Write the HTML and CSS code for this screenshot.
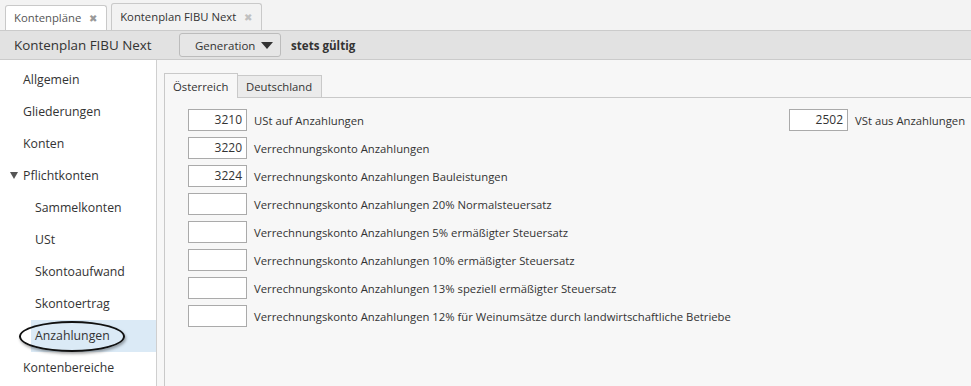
FILE: index.html
```html
<!DOCTYPE html>
<html lang="de">
<head>
<meta charset="utf-8">
<title>Kontenplan FIBU Next</title>
<link rel="stylesheet" href="styles.css">
</head>
<body>
<div class="app">
  <div class="doc-tabs">
    <div class="doc-tab">Kontenpläne <span class="x">✖</span></div>
    <div class="doc-tab active">Kontenplan FIBU Next <span class="x">✖</span></div>
  </div>
  <div class="toolbar">
    <span class="title">Kontenplan FIBU Next</span>
    <button class="dropdown">Generation <span class="caret"></span></button>
    <span class="valid">stets gültig</span>
  </div>
  <div class="main">
    <ul class="nav">
      <li class="item">Allgemein</li>
      <li class="item">Gliederungen</li>
      <li class="item">Konten</li>
      <li class="item group"><span class="tri"></span>Pflichtkonten</li>
      <li class="item sub">Sammelkonten</li>
      <li class="item sub">USt</li>
      <li class="item sub">Skontoaufwand</li>
      <li class="item sub">Skontoertrag</li>
      <li class="item sub selected">Anzahlungen<span class="ring"></span></li>
      <li class="item">Kontenbereiche</li>
    </ul>
    <div class="content">
      <div class="panel">
        <div class="tabs">
          <div class="tab active">Österreich</div>
          <div class="tab">Deutschland</div>
          <div class="tab-fill"></div>
        </div>
        <div class="form">
          <div class="col">
            <div class="row"><span class="field">3210</span><span class="lbl">USt auf Anzahlungen</span></div>
            <div class="row"><span class="field">3220</span><span class="lbl">Verrechnungskonto Anzahlungen</span></div>
            <div class="row"><span class="field">3224</span><span class="lbl">Verrechnungskonto Anzahlungen Bauleistungen</span></div>
            <div class="row"><span class="field"></span><span class="lbl">Verrechnungskonto Anzahlungen 20% Normalsteuersatz</span></div>
            <div class="row"><span class="field"></span><span class="lbl">Verrechnungskonto Anzahlungen 5% ermäßigter Steuersatz</span></div>
            <div class="row"><span class="field"></span><span class="lbl">Verrechnungskonto Anzahlungen 10% ermäßigter Steuersatz</span></div>
            <div class="row"><span class="field"></span><span class="lbl">Verrechnungskonto Anzahlungen 13% speziell ermäßigter Steuersatz</span></div>
            <div class="row"><span class="field"></span><span class="lbl">Verrechnungskonto Anzahlungen 12% für Weinumsätze durch landwirtschaftliche Betriebe</span></div>
          </div>
          <div class="col">
            <div class="row"><span class="field">2502</span><span class="lbl">VSt aus Anzahlungen</span></div>
          </div>
        </div>
      </div>
    </div>
  </div>
</div>
</body>
</html>
```
FILE: styles.css
```css
* { box-sizing: border-box; }
html, body { margin: 0; padding: 0; }
body {
  width: 971px;
  height: 386px;
  overflow: hidden;
  font-family: "Open Sans", "Noto Sans", sans-serif;
  color: #333;
  background: #f7f7f7;
}
.app { display: flex; flex-direction: column; height: 386px; }

.doc-tabs {
  height: 30px;
  background: #f3f3f3;
  display: flex;
  align-items: flex-end;
  padding-left: 5px;
  gap: 4px;
}
.doc-tab {
  height: 25px;
  padding: 0 9px 0 8px;
  border: 1px solid #c9c9c9;
  border-bottom: none;
  border-radius: 3px 3px 0 0;
  background: #fff;
  font-size: 11.3px;
  line-height: 24px;
  color: #555;
  white-space: nowrap;
}
.doc-tab.active {
  height: 27px;
  line-height: 26px;
  background: #f2f2f2;
  color: #333;
}
.doc-tab .x { font-size: 10px; color: #999; margin-left: 5px; }
.doc-tab.active .x { color: #c0c0c0; }

.toolbar {
  height: 30px;
  background: #e2e2e2;
  border-top: 1px solid #cbcbcb;
  border-bottom: 1px solid #cbcbcb;
  display: flex;
  align-items: center;
  padding-left: 14px;
}
.toolbar .title { font-size: 13.4px; color: #333; width: 165px; }
.dropdown {
  height: 24px;
  width: 102px;
  border: 1px solid #bcbcbc;
  border-radius: 3px;
  background: #e6e6e6;
  font-family: inherit;
  font-size: 11.5px;
  color: #333;
  padding: 0 0 0 15px;
  display: flex;
  align-items: center;
}
.caret {
  display: inline-block;
  width: 0; height: 0;
  border-left: 6px solid transparent;
  border-right: 6px solid transparent;
  border-top: 7px solid #333;
  margin-left: 6px;
}
.valid { font-weight: bold; font-size: 11.6px; margin-left: 10px; color: #333; }

.main { flex: 1; display: flex; min-height: 0; }
.nav {
  list-style: none;
  margin: 0;
  padding: 4px 0 0 0;
  width: 157px;
  background: #fff;
  border-right: 1px solid #cfcfcf;
}
.item {
  height: 32px;
  line-height: 32px;
  font-size: 12.3px;
  padding-left: 23px;
  color: #333;
  position: relative;
}
.item.group { padding-left: 10px; }
.tri {
  display: inline-block;
  width: 0; height: 0;
  border-left: 4px solid transparent;
  border-right: 4px solid transparent;
  border-top: 7px solid #555;
  margin-right: 5px;
  vertical-align: 1px;
}
.item.sub { margin-left: 31px; padding-left: 4px; }
.item.selected { background: #dbeaf6; }
.ring {
  position: absolute;
  left: -12px;
  top: 1px;
  width: 106px;
  height: 31px;
  border: 2.5px solid #111;
  border-radius: 50%;
  box-shadow: 1px 2px 3px rgba(0,0,0,0.35);
}

.content { flex: 1; padding: 13px 0 0 7px; min-width: 0; }
.panel { border-left: 1px solid #c9c9c9; height: 100%; }
.tabs { display: flex; align-items: flex-end; height: 25px; }
.tab {
  font-size: 11.3px;
  padding: 0 8px;
  border: 1px solid #c9c9c9;
  border-bottom: none;
  color: #333;
  white-space: nowrap;
}
.tab.active {
  height: 25px; line-height: 25px;
  border-left: none;
  background: #f7f7f7;
  width: 73px;
}
.tab:not(.active) {
  height: 23px; line-height: 22px;
  background: #ebebeb;
  border-left: none;
  border-bottom: 1px solid #c9c9c9;
  width: 84px;
}
.tab-fill { flex: 1; border-bottom: 1px solid #c9c9c9; height: 1px; }

.form {
  display: grid;
  grid-template-columns: 601px auto;
  padding: 11px 0 0 23px;
}
.col { display: flex; flex-direction: column; gap: 6px; }
.row { display: flex; align-items: center; height: 22px; }
.field {
  width: 59px;
  height: 22px;
  border: 1px solid #aaa;
  background: #fff;
  font-size: 12px;
  line-height: 20px;
  text-align: right;
  padding-right: 4px;
  color: #333;
}
.lbl { font-size: 11.3px; margin-left: 7px; color: #333; white-space: nowrap; }
```
